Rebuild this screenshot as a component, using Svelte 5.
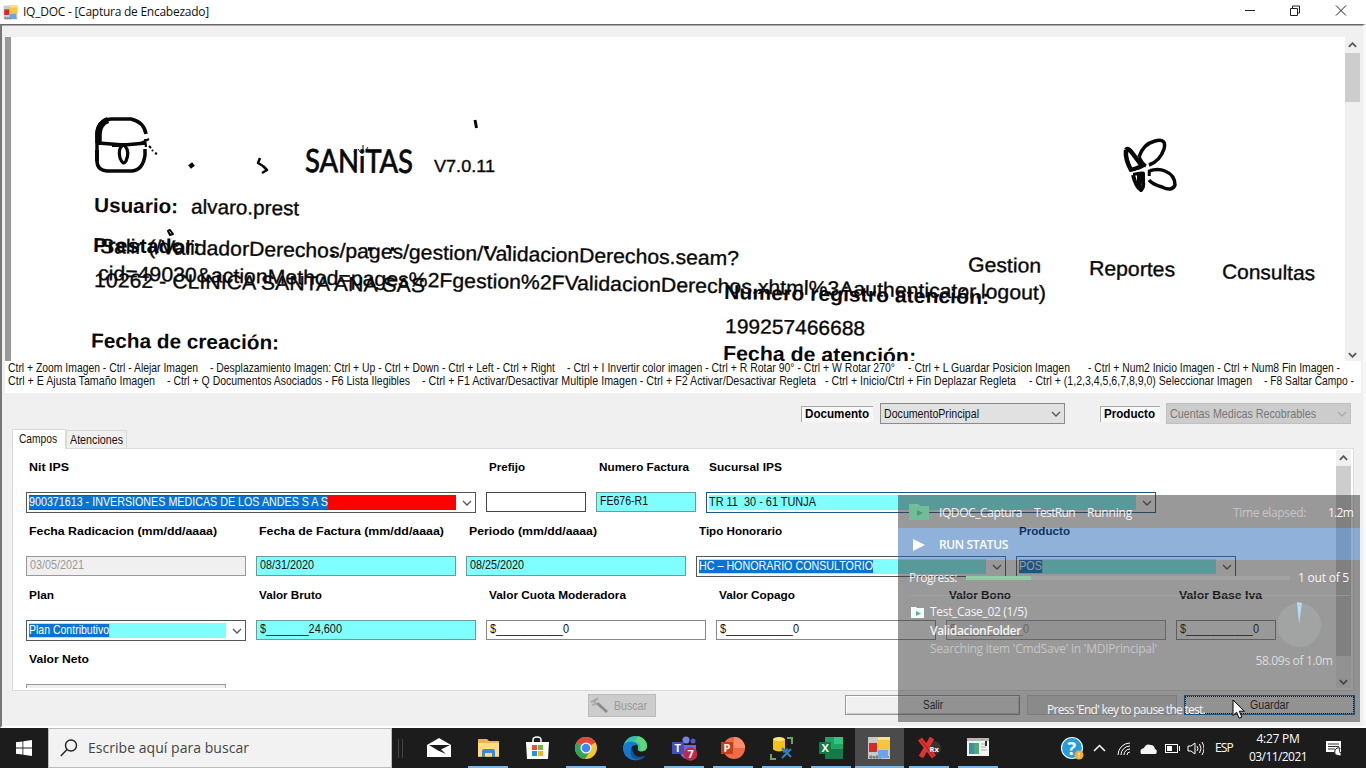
<script>
  function fit(node, width) {
    const n = [...node.textContent].length;
    const w = node.getBoundingClientRect().width;
    if (!width || n < 2 || !w) return;
    if (getComputedStyle(node).fontFamily.includes('Liberation')) {
      node.style.transform = `scaleX(${width / w})`;
      node.style.marginRight = width - w + 'px';
    } else {
      node.style.letterSpacing = (width - w) / n + 'px';
    }
  }

  const rows = [
    [
      { label: 'Nit IPS', lw: 40, w: 450, kind: 'combo', value: '900371613 - INVERSIONES MEDICAS DE LOS ANDES S A S', vw: 299, sel: true, fill: 'red' },
      { label: 'Prefijo', lw: 36, w: 100, kind: 'text', value: '', dark: true },
      { label: 'Numero Factura', lw: 90, w: 100, kind: 'text', value: 'FE676-R1', vw: 48, fill: 'cyan' },
      { label: 'Sucursal IPS', lw: 73, w: 450, kind: 'combo', value: 'TR 11  30 - 61 TUNJA', vw: 107, fill: 'cyan', focus: true }
    ],
    [
      { label: 'Fecha Radicacion (mm/dd/aaaa)', lw: 188, w: 220, kind: 'text', value: '03/05/2021', vw: 54, fill: 'off' },
      { label: 'Fecha de Factura (mm/dd/aaaa)', lw: 185, w: 200, kind: 'text', value: '08/31/2020', vw: 54, fill: 'cyan' },
      { label: 'Periodo (mm/dd/aaaa)', lw: 128, w: 220, kind: 'text', value: '08/25/2020', vw: 54, fill: 'cyan' },
      { label: 'Tipo Honorario', lw: 83, w: 310, kind: 'combo', value: 'HC – HONORARIO CONSULTORIO', vw: 174, sel: true, fill: 'cyan' },
      { label: 'Producto', lw: 51, w: 220, kind: 'combo', value: 'POS', vw: 23, sel: true, fill: 'cyan' }
    ],
    [
      { label: 'Plan', lw: 25, w: 220, kind: 'combo', value: 'Plan Contributivo', vw: 80, sel: true, fill: 'cyan' },
      { label: 'Valor Bruto', lw: 63, w: 220, kind: 'text', value: '$_______24,600', vw: 82, fill: 'cyan' },
      { label: 'Valor Cuota Moderadora', lw: 137, w: 220, kind: 'text', value: '$___________0', vw: 79 },
      { label: 'Valor Copago', lw: 76, w: 220, kind: 'text', value: '$___________0', vw: 79 },
      { label: 'Valor Bono', lw: 62, w: 220, kind: 'text', value: '$___________0', vw: 79, fill: 'off' },
      { label: 'Valor Base Iva', lw: 83, w: 100, kind: 'text', value: '$___________0', vw: 79 }
    ],
    [{ label: 'Valor Neto', lw: 60, w: 200, kind: 'text', value: '', fill: 'off' }]
  ];

  const help = [
    [
      ['Ctrl + Zoom Imagen - Ctrl - Alejar Imagen', 8, 190], ['- Desplazamiento Imagen: Ctrl + Up - Ctrl + Down - Ctrl + Left - Ctrl + Right', 210, 345],
      ['- Ctrl + I Invertir color imagen - Ctrl + R Rotar 90° - Ctrl + W Rotar 270°', 567, 328], ['- Ctrl + L Guardar Posicion Imagen', 908, 162],
      ['- Ctrl + Num2 Inicio Imagen - Ctrl + Num8 Fin Imagen -', 1088, 252]
    ],
    [
      ['Ctrl + E Ajusta Tamaño Imagen', 8, 147], ['- Ctrl + Q Documentos Asociados - F6 Lista Ilegibles', 167, 243],
      ['- Ctrl + F1 Activar/Desactivar Multiple Imagen - Ctrl + F2 Activar/Desactivar Regleta', 422, 394],
      ['- Ctrl + Inicio/Ctrl + Fin Deplazar Regleta', 825, 191], ['- Ctrl + (1,2,3,4,5,6,7,8,9,0) Seleccionar Imagen', 1029, 223], ['- F8 Saltar Campo -', 1264, 90]
    ]
  ];
  const gap = (line, i) => (i === 0 ? 1 : line[i][1] - line[i - 1][1] - line[i - 1][2]);

  const scan = [
    ['V7.0.11', 434, 172, 61, 17, 0, 0], ['Usuario:', 94, 212, 84, 20.3, 1, 1], ['alvaro.prest', 191, 213.5, 108, 20.3, 0, 1],
    ['Prestador:', 93, 252, 107, 20.3, 1, 0.8], ['Salir (/ValidadorDerechos/pages/gestion/ValidacionDerechos.seam?', 100, 253, 639, 20.3, 0, 1.1],
    ['cid=49030&actionMethod=pages%2Fgestion%2FValidacionDerechos.xhtml%3Aauthenticator.logout)', 98, 280, 948, 20.3, 0, 1.2],
    ['10262 - CLINICA SANTA ANA SAS', 94, 287, 331, 20.3, 0, 0.9], ['Fecha de creación:', 91, 347.5, 188, 20.3, 1, 0.6],
    ['Numero registro atención:', 724, 299, 265, 20.3, 1, 1.1], ['199257466688', 725, 333, 140, 20.3, 0, 1],
    ['Fecha de atención:', 723, 360, 193, 20.3, 1, 0.9], ['Gestion', 968, 271.5, 73, 20.3, 0, 1], ['Reportes', 1089, 275, 86, 20.3, 0, 1],
    ['Consultas', 1222, 278.5, 93, 20.3, 0, 1]
  ];

  const tasks = ['mail', 'explorer', 'store', 'chrome', 'edge', 'teams', 'ppt', 'sql', 'excel', 'app', 'rx', 'win'];
  const idle = ['mail', 'store', 'edge'];
</script>

{#snippet t(text, width, cls = '')}<span class="t {cls}" use:fit={width}>{text}</span>{/snippet}
{#snippet chev(up = false)}
  <svg class="chev" width="10" height="6" viewBox="0 0 10 6"><path d={up ? 'M1 5 5 1 9 5' : 'M1 1 5 5 9 1'} /></svg>
{/snippet}
{#snippet formsIcon()}
  <rect x="1" y="1" width="22" height="22" fill="#c9c9c9" /><path d="M2 21h20M4 19v4M7 20v3M10 19v4M13 20v3" stroke="#666" />
  <rect x="2" y="7" width="8" height="9" fill="#d52b2b" /><rect x="11" y="1" width="12" height="12" fill="#f5c53b" /><rect x="11" y="14" width="10" height="8" fill="#6aa5e4" /><path d="M11 1h12v3H11z" fill="#ffe18a" />
{/snippet}

<div class="screen">
  <header class="title">
    <svg width="15" height="15" viewBox="0 0 24 24">{@render formsIcon()}</svg>
    {@render t('IQ_DOC - [Captura de Encabezado]', 186)}
    <svg class="wb" width="106" height="14" viewBox="0 0 106 14"><path d="M1 6.5h10M46.5 4.5h7v7h-7zM48.5 4v-2h7v7h-2M92 1.5l10 10M102 1.5l-10 10" /></svg>
  </header>

  <main class="frame">
    <section class="viewer">
      <svg class="scan" width="1340" height="324" viewBox="5 37 1340 324">
        <rect x="5" y="37" width="6" height="324" fill="#999" />
        {#each scan as [s, x, y, w, size, bold, rot]}
          <text {x} {y} textLength={w} lengthAdjust="spacingAndGlyphs" font-size={size} font-weight={bold ? 700 : 400} class:thin={!bold} transform="rotate({rot} {x} {y})">{s}</text>
        {/each}
        <text class="brand" x="305" y="172" textLength="108" lengthAdjust="spacingAndGlyphs" transform="rotate(.4 305 172)">SANiTAS</text>
        <g class="ink">
          <path d="M97 143V132Q99 120 111 119H131Q144 122 146 134M97 143V161Q97 170 107 171H132Q143 170 145 155V149M98 143l13 1 13 1 22-2" stroke-width="3.5" />
          <path d="M98.500 143V134Q99 123 108 120" stroke-width="6.500" /><path d="M112 145h14M97 150v11" stroke-width="4" />
          <path d="M122 146Q118 149 120 158Q123 166 126 161Q130 152 125 146" stroke-width="3.200" />
          <path d="M141 143l8-4M145 139l1 8M149 146l2 2M152 150l1 1M155 153l2 1" stroke-width="2.200" />
          <path d="M189.500 167l4-3" stroke-width="4.500" />
          <path d="M260 158l-2 5 5 3M263 166l4 4-5 3" stroke-width="2.500" /><path d="M475 120l1.500 8" stroke-width="3" />
          <path d="M358 149l3 4M363 145v4M366 150l2-3M354 151l2 5" stroke-width="1" />
          <path d="M168 231l2-1 3 4-3 1z" stroke-width="2" /><path d="M368 249h4M487 246v3M508 245v3M391 249h3M333 254v2" stroke-width="3.500" />
          <path d="M1139 157Q1143 144 1155 141Q1167 138 1164 149Q1160 161 1149 165M1139 157Q1142 164 1146 166" stroke-width="3.500" />
          <path d="M1126 150Q1128 147 1133 154L1142 166Q1135 169 1131 170Q1125 159 1126 150" stroke-width="4.500" />
          <path d="M1133 173.500h10V182Q1144 187 1141 190Q1136 187 1133 175M1139 174v14" stroke-width="4" />
          <path d="M1149 176V171Q1158 168 1165 171Q1175 175 1175 185Q1172 192 1162 187Q1152 184 1149 180" stroke-width="3.500" />
          <path d="M1127 173.500 1150 168.500M1147 166v16" stroke="#fff" stroke-width="1.300" />
        </g>
      </svg>
      <div class="sb"><span>{@render chev(true)}</span><i style:height="49px"></i><b></b><span class="end">{@render chev()}</span></div>
    </section>

    <section class="help">
      {#each help as line}
        <div>{#each line as [s, x, w], i}<span style:margin-left="{gap(line, i)}px">{@render t(s, w)}</span>{/each}</div>
      {/each}
    </section>

    <section class="bar">
      <div class="tag w1">{@render t('Documento', 64)}</div>
      <div class="drop">{@render t('DocumentoPrincipal', 95)}{@render chev()}</div>
      <div class="tag w2">{@render t('Producto', 51)}</div>
      <div class="drop off">{@render t('Cuentas Medicas Recobrables', 146)}{@render chev()}</div>
    </section>

    <nav class="tabs"><div class="on">{@render t('Campos', 38)}</div><div>{@render t('Atenciones', 53)}</div></nav>
    <section class="panel">
      <div class="form">
        {#each rows as row}
          <div class="row">
            {#each row as f}
              <div class="field" style:width="{f.w}px">
                <div class="label">{@render t(f.label, f.lw)}</div>
                <div class="box {f.kind} {f.fill ?? ''}" class:focus={f.focus} class:dark={f.dark}>
                  <div class="in">{@render t(f.value, f.vw, f.sel ? 'sel' : '')}</div>
                  {#if f.kind === 'combo'}{@render chev()}{/if}
                </div>
              </div>
            {/each}
          </div>
        {/each}
      </div>
      <div class="sb small"><span>{@render chev(true)}</span><i style:height="190px"></i><b></b><span class="end">{@render chev()}</span></div>
    </section>

    <footer class="actions">
      <div class="find"><svg width="22" height="18" viewBox="0 0 22 18"><path d="M8 6l10 9" stroke="#8c8c8c" stroke-width="3" /><path d="M2 5l5-2 2-2M3 8l4-1M6 3v5" stroke="#aaa" stroke-width="2" /></svg>{@render t('Buscar', 33)}</div>
      <div class="btn b1">{@render t('Salir', 20)}</div>
      <div class="btn b2"></div>
      <div class="btn b3">{@render t('Guardar', 39)}</div>
    </footer>
  </main>

  <aside class="overlay">
    <div class="o-top">
      <svg width="20" height="17" viewBox="0 0 20 17"><path d="M0 1h9l2 2h9v14H0z" fill="#72bd98" /><path d="M8 7l6 3-6 3z" fill="#4f9778" /></svg>
      <span style:width="95px">{@render t('IQDOC_Captura', 83)}</span><span style:width="53px">{@render t('TestRun', 41)}</span>{@render t('Running', 45)}
      <span class="push dim">{@render t('Time elapsed:', 73)}</span><span class="el">{@render t('1.2m', 25)}</span>
    </div>
    <div class="o-run"><svg width="12" height="12" viewBox="0 0 12 12"><path d="M0 0 12 6 0 12z" fill="#fff" /></svg><strong>{@render t('RUN STATUS', 69)}</strong></div>
    <div class="o-rest">
      <div class="prog">{@render t('Progress:', 48)}<i><b></b></i>{@render t('1 out of 5', 51)}</div>
      <hr />
      <div class="o-body">
        <div class="tree">
          <div><svg width="13" height="11" viewBox="0 0 13 11"><path d="M0 0h5l1 1h7v10H0z" fill="#f2fff8" /><path d="M5 4l5 2.5L5 9z" fill="#6aad8b" /></svg>{@render t('Test_Case_02 (1/5)', 97)}</div>
          <div class="ind"><strong>{@render t('ValidacionFolder', 91)}</strong></div>
          <div class="ind dim">{@render t("Searching item 'CmdSave' in 'MDIPrincipal'", 227)}</div>
        </div>
        <div class="dial">
          <svg width="46" height="46" viewBox="0 0 46 46"><circle cx="23" cy="23" r="22" fill="#a2a4a4" /><path d="M23 22 21 0 26 1z" fill="#b5dcf3" /></svg>
          {@render t('58.09s of 1.0m', 77)}
        </div>
      </div>
      <div class="pause">{@render t("Press 'End' key to pause the test.", 158)}</div>
    </div>
  </aside>
  <svg class="cursor" width="14" height="21" viewBox="0 0 14 21"><path d="M1 1v15.500l3.600-3.300 2.500 6 2.800-1.100-2.600-5.900h5.100z" fill="#fff" stroke="#000" /></svg>

  <div class="taskbar">
    <div class="start"><svg width="16" height="16" viewBox="0 0 16 16"><path d="M0 2.300 6.500 1.400v6.100H0zM7.300 1.300 16 0v7.500H7.300zM0 8.400h6.500v6.200L0 13.700zM7.300 8.400H16V16l-8.700-1.300z" fill="#fff" /></svg></div>
    <div class="search"><svg width="18" height="18" viewBox="0 0 18 18"><circle cx="11" cy="6.500" r="5.500" /><path d="M7 10.500.8 17" /></svg>{@render t('Escribe aquí para buscar', 161)}</div>
    <div class="grip"></div>
    <div class="apps">
      {#each tasks as a}
        <div class="app" class:active={a === 'app'} class:run={!idle.includes(a)}>
          <svg width="26" height="26" viewBox="0 0 26 26">
            {#if a === 'mail'}<path d="M1 9 13 2l12 7v12H1z" fill="#fff" /><path d="M3 9h21l-9 4.500 5 4.500-8-3.500z" fill="#1c1c1c" />
            {:else if a === 'explorer'}<path d="M3 3h9l2 2h10v16H3z" fill="#e9b64d" /><path d="M3 7h21v13H3z" fill="#ffdc7c" /><path d="M7 21v-6q0-2 2-2h9q2 0 2 2v6h-3v-4h-7v4z" fill="#3f87cf" />
            {:else if a === 'store'}<path d="M9 6V4q0-3 4-3t4 3v2" fill="none" stroke="#fff" stroke-width="1.500" /><path d="M2 6h23l-1 17H3z" fill="#fff" /><path d="M8 9h5v5H8z" fill="#e8523a" /><path d="M14 9h5v5h-5z" fill="#7cb82f" /><path d="M8 15h5v5H8z" fill="#2498df" /><path d="M14 15h5v5h-5z" fill="#f7b519" />
            {:else if a === 'chrome'}<circle cx="13" cy="12" r="11" fill="#f5c72f" /><path d="M13 12 3.500 6.500A11 11 0 0 1 22.500 6.500z" fill="#dd4b3e" /><path d="M3.500 6.500A11 11 0 0 0 12 23l5-8-4-3z" fill="#33a457" /><path d="M3.500 6.500Q7 1 13 1t9.500 6H13z" fill="#dd4b3e" /><circle cx="13" cy="12" r="5.500" fill="#fff" /><circle cx="13" cy="12" r="4.300" fill="#4285f4" />
            {:else if a === 'edge'}<path d="M1 14C1 5 7 0 13 0c7 0 12 4 12 10 0 5-4 6-8 5-2-1-1-2-1-4 0-5-8-6-11-2z" fill="#35c1b1" /><path d="M16 0c6 2 9 6 9 10 0 4-4 6-8 5 3-3 2-8-4-10z" fill="#62d676" /><path d="M1 12C2 5 11 3 15 9q-6-1-6 6c0 6 7 9 14 5-3 4-8 5-12 4C5 23 1 18 1 12z" fill="#1579d0" /><path d="M10 12c-4 5 0 14 9 11 2-1 3-2 4-3-6 2-11 0-12-4z" fill="#14549b" />
            {:else if a === 'teams'}<circle cx="15" cy="4" r="3.500" fill="#7b83eb" /><circle cx="22" cy="5" r="2.500" fill="#5059c9" /><path d="M9 9h16v8q-2 6-8 6t-8-6z" fill="#6870d4" /><path d="M1 6h12v12H1z" fill="#464eb8" /><text x="3.500" y="16" font-size="11">T</text><circle cx="19.500" cy="18" r="6.800" fill="#c4264b" /><text x="16.500" y="22" font-size="11">7</text>
            {:else if a === 'ppt'}<circle cx="14" cy="12" r="11" fill="#ed6c47" /><path d="M14 1a11 11 0 0 1 11 11H14z" fill="#ff8f6b" /><path d="M1 6h12v12H1z" fill="#c43e1c" /><text x="3.500" y="16" font-size="11">P</text>
            {:else if a === 'sql'}<ellipse cx="10" cy="3.500" rx="6" ry="2.500" fill="#ffe57a" /><path d="M4 3.500v10q6 4 12 0v-10q-6 4-12 0" fill="#f2c11c" /><path d="M18 2h5v6M7 23H2v-5" fill="none" stroke="#6fa267" stroke-width="2" /><path d="M13 12l9 9M22 13 13 22M14 16l5-3" stroke="#347fb4" stroke-width="2.200" />
            {:else if a === 'excel'}<path d="M7 1h18v22H7z" fill="#21a366" /><path d="M16 1h9v7h-9z" fill="#33c481" /><path d="M7 13h18v10H7z" fill="#15794a" /><path d="M1 6h12v12H1z" fill="#107c41" /><text x="3.500" y="16" font-size="11">X</text>
            {:else if a === 'app'}{@render formsIcon()}
            {:else if a === 'rx'}<circle cx="18" cy="12" r="7" fill="#343434" /><path d="M4 3l14 18M16 2 5 21" stroke="#e23131" stroke-width="5" /><path d="M4 3l14 18" stroke="#b41919" stroke-width="1" /><text x="13.500" y="15.500" font-size="7.500">Rx</text>
            {:else}<path d="M2 2h22v18H2z" fill="#f2f2f2" /><path d="M2 2h22v3H2z" fill="#b7b7b7" /><path d="M4 7h10v11H4z" fill="#3d8fa0" /><path d="M9 7h5v11H9z" fill="#52a878" /><path d="M16 8h6M16 11h5M16 14h6" stroke="#aaa" /><path d="M21 5v5" stroke="#333" stroke-width="2" />{/if}
          </svg>
        </div>
      {/each}
    </div>
    <svg class="tray" width="144" height="26" viewBox="0 0 144 26">
      <circle cx="12" cy="12" r="10.500" fill="#279cd8" stroke="#e6f6ff" stroke-width="1.200" /><text x="7.500" y="18.500" font-size="18">?</text><circle cx="19" cy="19" r="4.500" fill="#f2ae30" /><path d="M19 16.500v3M19 20.500v1" stroke="#fff" />
      <g class="line"><path d="M34 15l5.500-5.500L45 15" stroke-width="1.500" /><path d="M58 19a12 12 0 0 1 12-12M61 19a9 9 0 0 1 9-9M64 19a6 6 0 0 1 6-6M67 19a3 3 0 0 1 3-3" /></g>
      <path d="M81 18q-2-5 3-6 2-5 7-3 3 0 4 4 3 1 1 5z" fill="#f5f5f5" />
      <g class="line"><rect x="105.500" y="8.500" width="12" height="8" /><path d="M119.500 10v5" /><path d="M128 10h3l4-3v11l-4-3h-3zM137 10q2 2.500 0 5M139.500 8q3 4.500 0 9M142 6q4 6.500 0 13" /></g><path d="M107 10h5v5h-5z" fill="#fff" />
    </svg>
    <div class="lang">{@render t('ESP', 18)}</div>
    <div class="clock">{@render t('4:27 PM', 43)}{@render t('03/11/2021', 58)}</div>
    <svg class="note" width="18" height="18" viewBox="0 0 18 18"><path d="M1 1h15v11h-3v4l-4-4H1z" fill="#fff" /><path d="M3 4h11M3 6.500h11M3 9h7" stroke="#333" /><path d="M15 8a4 4 0 1 0 2 6 4 4 0 0 1-2-6" fill="#fff" stroke="#1c1c1c" /></svg>
  </div>
</div>

<style>
  :global(body) { margin: 0; overflow: hidden; }
  .screen { position: relative; width: 1366px; height: 768px; display: flex; flex-direction: column; overflow: hidden; background: #f0f0f0; font: 12px/14px "Liberation Sans", Arial, sans-serif; color: #111; }
  .screen * { box-sizing: border-box; }
  svg { flex: none; display: block; }
  .t { display: inline-block; white-space: pre; flex: none; transform-origin: left center; }
  .title { height: 24px; flex: none; background: #fff; display: flex; align-items: center; padding-left: 3px; gap: 5px; font: 12px/16px "Open Sans", sans-serif; }
  .wb { margin: -3px 16px 0 auto; fill: none; stroke: #222; }
  .frame { height: 704px; flex: none; border-top: 1px solid #696969; border-left: 2px solid #777; border-right: 3px solid #f7f7f7; box-shadow: inset 0 1px #aaa; padding: 12px 0 0 3px; display: flex; flex-direction: column; border-bottom: 2px solid #fff; }
  .viewer { display: flex; height: 324px; flex: none; background: #fff; width: 1355px; }
  .scan { background: #fff; font-family: "Liberation Sans", Arial, sans-serif; fill: #080808; }
  .scan .thin { stroke: #080808; stroke-width: .35px; }
  .scan .brand { font: 32px Lato, sans-serif; stroke: #080808; stroke-width: .8px; }
  .ink { fill: none; stroke: #080808; stroke-linejoin: round; }
  .sb { width: 15px; background: #f0f0f0; display: flex; flex-direction: column; }
  .sb span { height: 16px; display: grid; place-items: center; }
  .sb i { background: #cdcdcd; }
  .sb b { flex: 1; }
  .sb .end { height: 12px; background: #f0f0f0; }
  .chev { fill: none; stroke: #555; stroke-width: 1.3; }
  .sb .chev { stroke-width: 2; width: 9px; }
  .help { height: 32px; flex: none; width: 1356px; background: #fff; padding: 0 0 0 2px; line-height: 14px; font-size: 12.2px; }
  .help div { display: flex; height: 13px; }
  .bar { height: 37px; flex: none; display: flex; padding: 10px 0 0 796px; }
  .tag { height: 16px; margin-top: 3px; padding: 0 0 0 3px; border: 1px solid #aaa; border-width: 1px 0 0 1px; background: #f8f8f8; font-weight: 700; line-height: 14px; font-size: 12px; color: #000; }
  .w1 { width: 72px; margin-right: 7px; }
  .w2 { width: 60px; margin: 3px 6px 0 35px; }
  .drop { width: 185px; height: 21px; border: 1px solid #8a8a8a; background: #e1e1e1; display: flex; align-items: center; justify-content: space-between; padding: 0 3px; font-size: 12.2px; }
  .drop.off { background: #ccc; border-color: #bfbfbf; color: #777; }
  .drop.off .chev { stroke: #aaa; }
  .tabs { height: 18px; flex: none; display: flex; align-items: flex-end; padding-left: 7px; font-size: 12.2px; position: relative; z-index: 1; }
  .tabs div { border: 1px solid #d9d9d9; border-bottom: 0; height: 18px; padding: 2px 0 0 3px; width: 61px; }
  .tabs .on { background: #fff; height: 20px; margin-bottom: -1px; padding: 2px 0 0 6px; width: 54px; }
  .panel { width: 1342px; height: 243px; flex: none; margin-left: 7px; background: #fff; border: 1px solid #dcdcdc; display: flex; padding: 1px 2px 2px 0; overflow: hidden; }
  .form { width: 1323px; flex: none; padding: 8px 0 0 13px; overflow: hidden; }
  .row { display: flex; gap: 10px; height: 64px; }
  .field { flex: none; }
  .label { height: 34px; padding: 2px 0 0 3px; font-weight: 700; font-size: 11.8px; color: #000; }
  .box { height: 20px; border: 1px solid #888; background: #fff; display: flex; align-items: center; font-size: 12.2px; }
  .box.combo { height: 21px; border-color: #555; padding-right: 3px; }
  .box.focus { border-color: #1e5786; }
  .box.dark { border-color: #444; }
  .text .in { padding: 0 0 2px 3px; }
  .combo .in { flex: 1; height: 15px; margin: 0 6px 0 2px; line-height: 14px; }
  .combo .in .t { height: 13px; line-height: 13px; }
  .cyan.text, .cyan .in { background: #80ffff; }
  .cyan.text { border-color: #6a9c9c; }
  .red .in { background: #f00; }
  .box.off { background: #f0f0f0; border-color: #999; color: #999; }
  .sel { background: #0873d2; color: #fff; }
  .small { margin-left: auto; width: 15px; }
  .actions { display: flex; padding: 3px 0 0 583px; }
  .find { width: 68px; height: 23px; background: #ccc; border: 1px solid #bbb; color: #999; display: flex; align-items: center; gap: 3px; }
  .btn { height: 20px; margin-top: 1px; border: 1px solid #999; box-shadow: inset 1px 1px #fff, inset -1px -1px #c8c8c8; text-align: center; line-height: 19px; }
  .b1 { width: 175px; margin-left: 189px; }
  .b2 { width: 150px; margin: 1px 7px 0 7px; background: #e1e1e1; border-color: #c4c4c4; box-shadow: none; }
  .b3 { width: 171px; border: 1px solid #176db5; outline: 1px dotted #000; outline-offset: -2px; }
  .overlay { position: absolute; left: 898px; top: 495px; width: 462px; height: 227px; z-index: 3; display: flex; flex-direction: column; color: #f4f4f4; font: 12px/16px "Open Sans", sans-serif; }
  .o-top { height: 33px; background: #33333380; display: flex; align-items: center; padding: 3px 7px 0 11px; }
  .o-top > svg { margin: -4px 10px 0 0; }
  .push { margin-left: auto; }
  .el { margin-left: 22px; }
  .dim { color: #c6c6c6; }
  .o-run { height: 32px; background: #2163b480; display: flex; align-items: center; gap: 14px; padding: 1px 0 0 15px; color: #fff; }
  strong { font-weight: 600; }
  .o-rest { flex: 1; background: #33333380; padding: 10px 10px 0 11px; }
  .prog { display: flex; align-items: center; height: 16px; }
  .prog i { width: 324px; height: 4px; background: #a3a3a3; margin: 0 8px 0 9px; }
  .prog b { display: block; width: 65px; height: 4px; background: #90cda6; }
  hr { border: 0; border-top: 1px solid #a8a8a880; margin: 9px 0 0; }
  .o-body { display: flex; justify-content: space-between; height: 88px; }
  .tree { padding: 7px 0 0 2px; }
  .tree div { height: 18.500px; display: flex; align-items: center; gap: 6px; }
  .tree .ind { padding-left: 19px; }
  .dial { display: flex; flex-direction: column; align-items: center; gap: 5px; width: 92px; padding-top: 6px; color: #ddd; margin-right: 10px; }
  .dial svg { margin-left: 10px; }
  .pause { padding: 18px 0 0 138px; line-height: 16px; }
  .cursor { position: absolute; left: 1232px; top: 699px; z-index: 4; }
  .taskbar { height: 40px; flex: none; background: #1c1c1c; display: flex; color: #fff; font: 12px/18px "Open Sans", sans-serif; }
  .start { width: 48px; display: grid; place-items: center; }
  .search { width: 344px; background: #f2f2f2; border: 1px solid #bbb; display: flex; align-items: center; gap: 10px; padding-left: 11px; font-size: 14px; color: #444; }
  .search svg { fill: none; stroke: #222; stroke-width: 1.400; }
  .grip { width: 5px; height: 19px; border: solid #444; border-width: 0 1px; margin: 11px 11px 0 6px; }
  .apps { display: flex; width: 588px; }
  .app { width: 49px; height: 40px; display: flex; justify-content: center; padding-top: 8px; }
  .run { background: linear-gradient(#76b9ed, #76b9ed) center bottom / 40px 2px no-repeat; }
  .active { background-color: #4b4b4b; background-size: 49px 2px; }
  .app text, .tray text { fill: #fff; font-family: "Open Sans", sans-serif; font-weight: 700; }
  .tray { margin: 8px 0 0 58px; }
  .line { fill: none; stroke: #fff; }
  .lang { width: 18px; margin: 11px 0 0 11px; }
  .clock { display: flex; flex-direction: column; align-items: center; width: 60px; margin: 2px 0 0 15px; }
  .note { margin: 12px 0 0 17px; }
</style>
